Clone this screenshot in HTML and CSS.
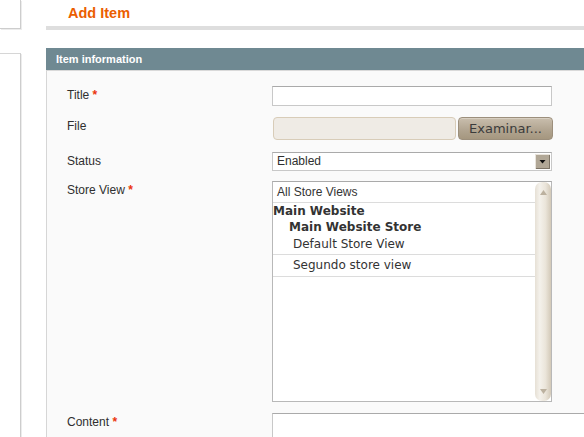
FILE: index.html
```html
<!DOCTYPE html>
<html lang="en">
<head>
<meta charset="utf-8">
<title>Add Item</title>
<link rel="stylesheet" href="styles.css">
</head>
<body>
<div class="page">
  <aside class="side">
    <div class="side-box side-top"></div>
    <div class="side-box side-bottom"></div>
  </aside>
  <main class="main">
    <div class="content-header">
      <h3 class="page-title">Add Item</h3>
    </div>
    <div class="fieldset-head">
      <h4 class="fieldset-title">Item information</h4>
    </div>
    <div class="fieldset">
      <div class="row row-title">
        <label class="label">Title <span class="req">*</span></label>
        <div class="value"><input class="text-input" type="text"></div>
      </div>
      <div class="row row-file">
        <label class="label">File</label>
        <div class="value file-value">
          <span class="file-field"></span>
          <span class="file-btn">Examinar...</span>
        </div>
      </div>
      <div class="row row-status">
        <label class="label">Status</label>
        <div class="value">
          <div class="select">
            <span class="select-text">Enabled</span>
            <span class="select-btn">
              <svg width="15" height="15" viewBox="0 0 15 15">
                <rect x="0" y="0" width="15" height="15" fill="#e9e4dc"/>
                <rect x="1" y="1" width="14" height="14" fill="#7d7466"/>
                <rect x="1" y="1" width="13" height="13" fill="#b1a796"/>
                <path d="M4.5 6 L10.5 6 L7.5 9.5 Z" fill="#111"/>
              </svg>
            </span>
          </div>
        </div>
      </div>
      <div class="row row-store">
        <label class="label">Store View <span class="req">*</span></label>
        <div class="value">
          <div class="multiselect">
            <div class="ms-list">
              <div class="ms-opt ms-all">All Store Views</div>
              <div class="ms-group">Main Website</div>
              <div class="ms-group ms-sub">Main Website Store</div>
              <div class="ms-opt ms-view ms-first">Default Store View</div>
              <div class="ms-opt ms-view ms-second">Segundo store view</div>
            </div>
            <div class="ms-scroll">
              <svg class="arrow-up" width="7" height="5" viewBox="0 0 7 5"><path d="M3.5 0 L7 5 L0 5 Z" fill="#bcb19f"/></svg>
              <svg class="arrow-down" width="7" height="5" viewBox="0 0 7 5"><path d="M0 0 L7 0 L3.5 5 Z" fill="#bcb19f"/></svg>
            </div>
          </div>
        </div>
      </div>
      <div class="row row-content">
        <label class="label">Content <span class="req">*</span></label>
        <div class="value value-grow"><div class="textarea"></div></div>
      </div>
    </div>
  </main>
</div>
</body>
</html>
```

FILE: styles.css
```css
html, body {
  margin: 0;
  padding: 0;
  background: #ffffff;
  overflow: hidden;
  height: 437px;
}

.page {
  display: flex;
  gap: 25px;
  height: 437px;
}

.side {
  width: 21px;
  flex: 0 0 21px;
  display: flex;
  flex-direction: column;
}

.side-box {
  box-sizing: border-box;
  width: 21px;
  background: #ffffff;
  border-right: 1px solid #cdcdcd;
  box-shadow: 1px 1px 0 #ececec;
}

.side-top {
  height: 29px;
  border-bottom: 1px solid #cdcdcd;
}

.side-bottom {
  margin-top: 24px;
  flex: 1;
  border-top: 1px solid #d6d6d6;
}

.main {
  flex: 1;
  min-width: 0;
  display: flex;
  flex-direction: column;
  overflow: hidden;
}

.content-header {
  height: 26px;
  flex: 0 0 26px;
  border-bottom: 4px solid #dedede;
}

.page-title {
  margin: 0;
  padding: 4px 0 0 22px;
  font: bold 14.5px/18px "Liberation Sans", Arial, sans-serif;
  color: #eb5e00;
}

.fieldset-head {
  margin-top: 18px;
  height: 22px;
  flex: 0 0 22px;
  background: #6f8992;
  border-bottom: 1px solid #d9d9d9;
  padding-left: 10px;
}

.fieldset-title {
  margin: 0;
  font: bold 11px/22px "Liberation Sans", Arial, sans-serif;
  color: #ffffff;
}

.fieldset {
  flex: 1;
  min-height: 0;
  overflow: hidden;
  background: #fafafa;
  border-left: 1px solid #d6d6d6;
  padding: 15px 0 0 20px;
}

.row {
  display: flex;
  align-items: flex-start;
}

.label {
  width: 205px;
  flex: 0 0 205px;
  padding-top: 2px;
  font: 12px/14px "Liberation Sans", Arial, sans-serif;
  color: #2f2f2f;
}

.req {
  color: #eb340a;
  font-weight: bold;
}

.value {
  flex: 0 0 auto;
}

.value-grow {
  flex: 1;
  min-width: 0;
}

.row-title { margin-bottom: 11px; }
.row-file { margin-bottom: 12px; }
.row-status { margin-bottom: 10px; }
.row-store { margin-bottom: 11px; }

.text-input {
  display: block;
  box-sizing: border-box;
  width: 280px;
  height: 20px;
  margin: 0;
  padding: 0 4px;
  background: #ffffff;
  border: 1px solid #c8c8c8;
  border-top-color: #aaaaaa;
  outline: none;
}

.file-value {
  display: flex;
  gap: 2px;
  padding-left: 1px;
}

.file-field {
  box-sizing: border-box;
  width: 183px;
  height: 23px;
  background: #efebe5;
  border: 1px solid #d8ccb8;
  border-radius: 4px;
}

.file-btn {
  box-sizing: border-box;
  width: 95px;
  height: 23px;
  border: 1px solid #9c8f7c;
  border-radius: 4px;
  background: linear-gradient(#c9bead, #b0a38f 60%, #a5977f);
  box-shadow: inset 0 1px 0 #d8cfc1;
  font: 13px/21px "DejaVu Sans", sans-serif;
  color: #3b3b3b;
  text-align: center;
}

.select {
  box-sizing: border-box;
  width: 280px;
  height: 19px;
  background: #ffffff;
  border: 1px solid #c8c8c8;
  border-top-color: #aaaaaa;
  display: flex;
  align-items: center;
  justify-content: space-between;
}

.select-text {
  padding-left: 4px;
  font: 12px/17px "Liberation Sans", Arial, sans-serif;
  color: #2f2f2f;
}

.select-btn {
  display: flex;
  width: 15px;
  height: 15px;
  margin-right: 1px;
}

.multiselect {
  box-sizing: border-box;
  width: 280px;
  height: 221px;
  background: #ffffff;
  border: 1px solid #b8b8b8;
  border-top-color: #aaaaaa;
  display: flex;
}

.ms-list {
  width: 262px;
  flex: 0 0 262px;
}

.ms-opt {
  border-bottom: 1px solid #dcdcdc;
  color: #333333;
}

.ms-all {
  padding: 3px 0 3px 4px;
  font: 12px/14px "Liberation Sans", Arial, sans-serif;
}

.ms-group {
  font: bold 12px/16px "DejaVu Sans", sans-serif;
  color: #333333;
}

.ms-sub {
  padding-left: 16px;
}

.ms-view {
  padding-left: 20px;
  font: 12px/16px "DejaVu Sans", sans-serif;
}

.ms-first { padding-top: 1px; padding-bottom: 2px; }
.ms-second { padding-top: 2px; padding-bottom: 3px; }

.ms-scroll {
  position: relative;
  width: 16px;
  flex: 0 0 16px;
  border-radius: 7px;
  background: linear-gradient(to right, #e6e0d5, #f4f1eb 30%, #ebe5da 65%, #d3c9b8);
}

.arrow-up {
  position: absolute;
  left: 5px;
  top: 8px;
}

.arrow-down {
  position: absolute;
  left: 5px;
  bottom: 7px;
}

.textarea {
  box-sizing: border-box;
  width: calc(100% + 40px);
  height: 80px;
  background: #ffffff;
  border: 1px solid #c8c8c8;
  border-top-color: #aaaaaa;
}
```
